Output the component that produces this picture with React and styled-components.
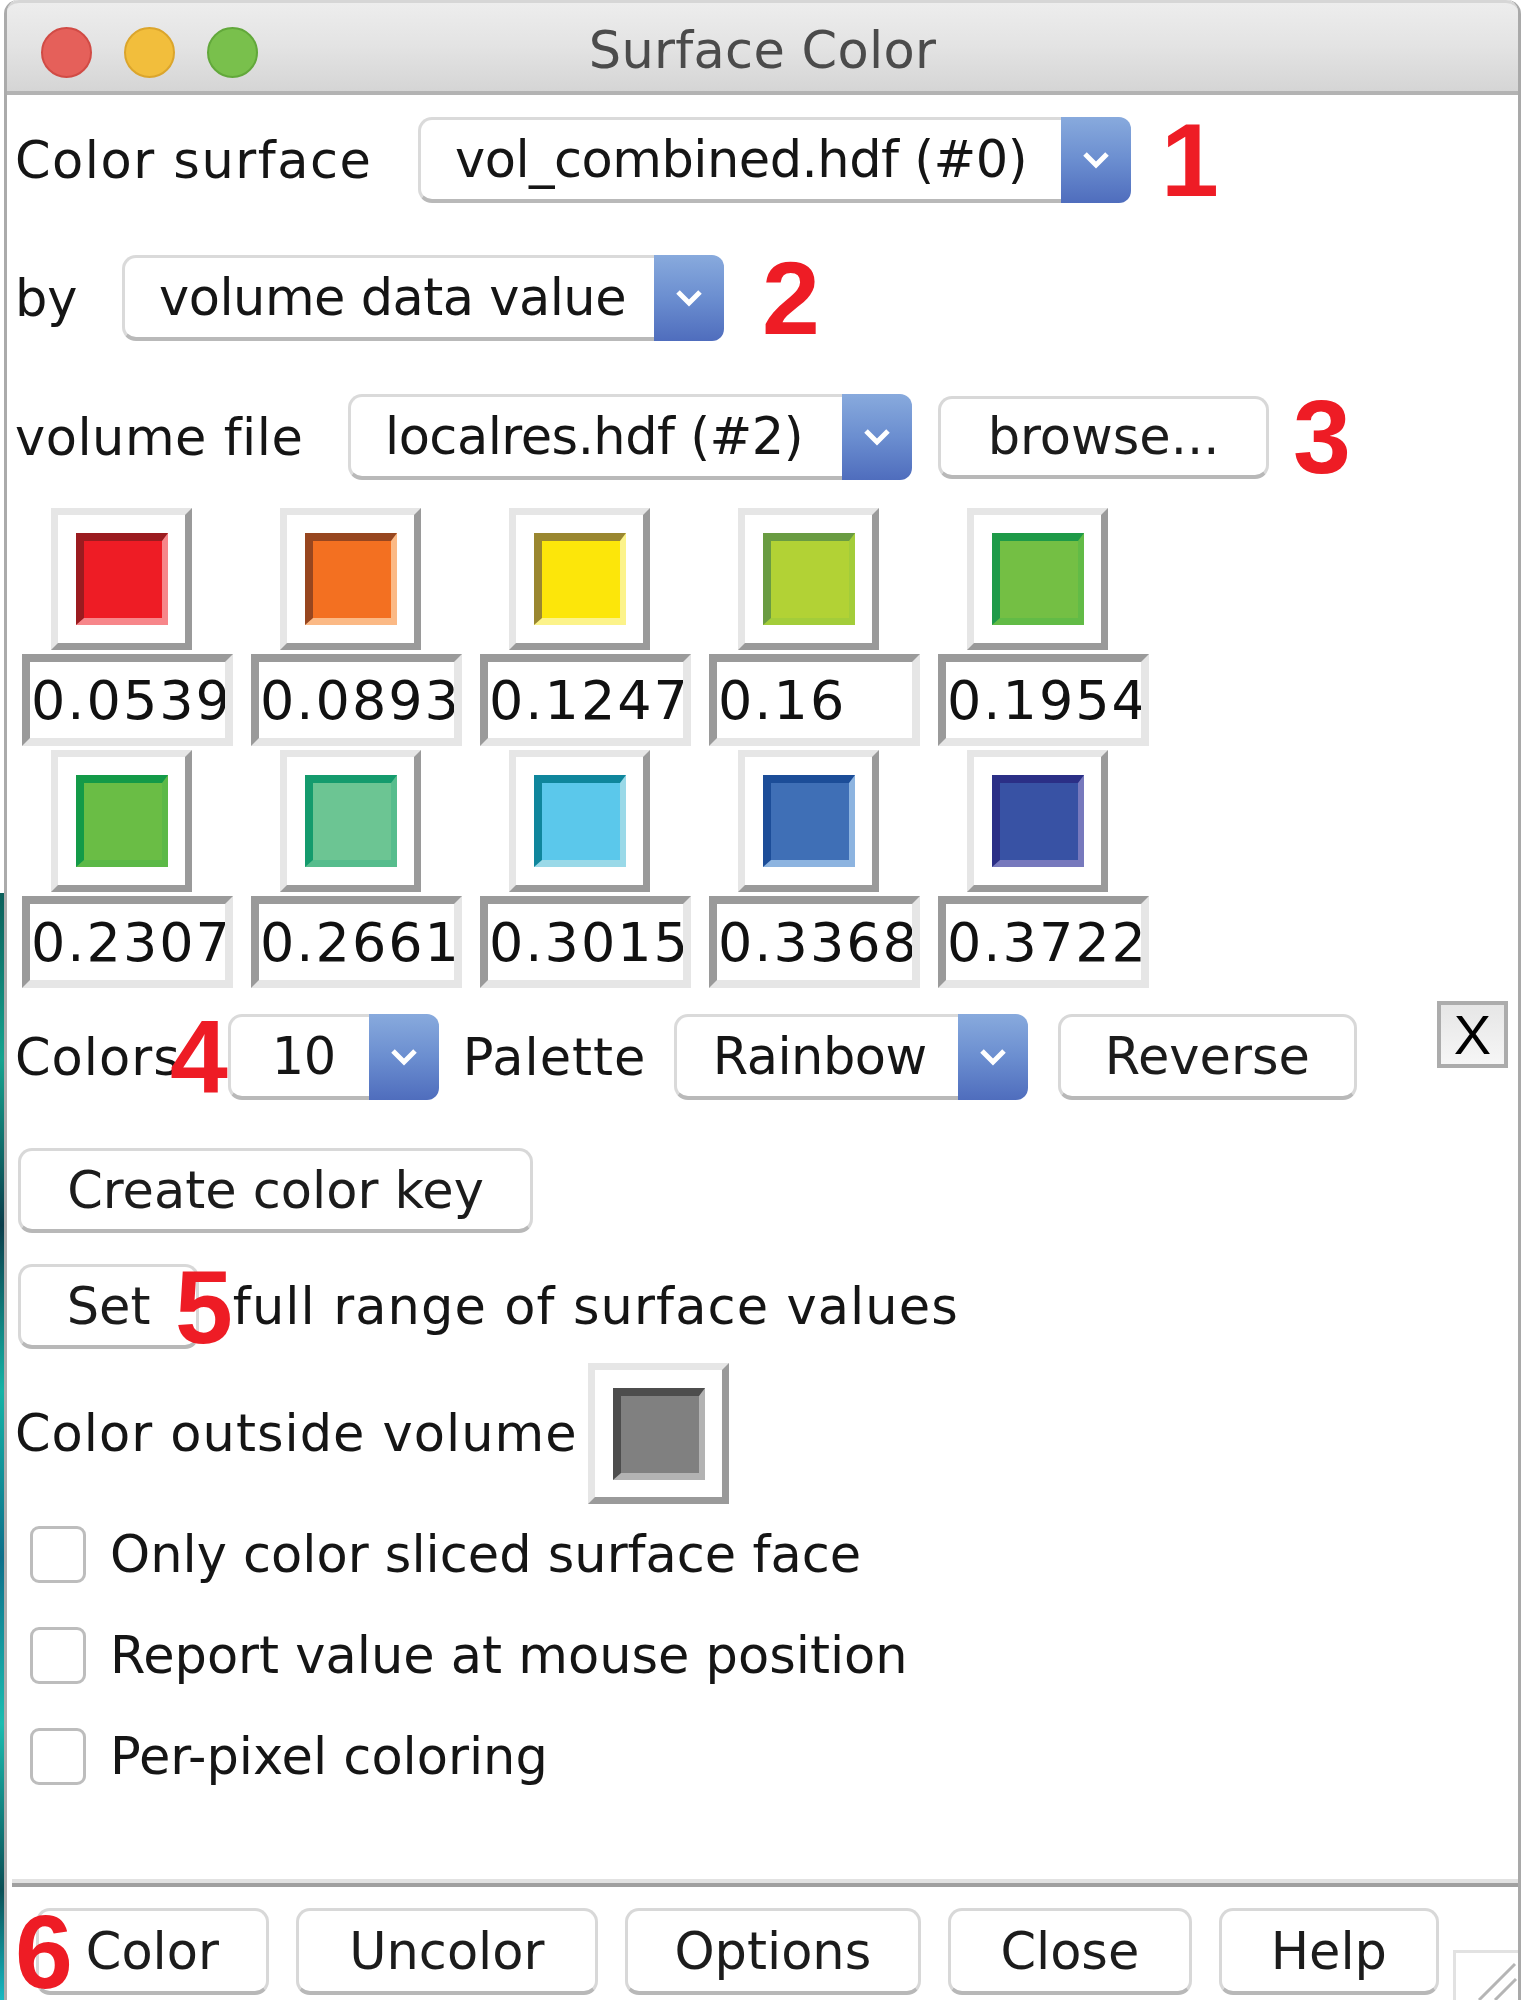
import React from "react";
import styled, { createGlobalStyle } from "styled-components";

const GlobalStyle = createGlobalStyle`
  html, body {
    margin: 0;
    padding: 0;
    background: #ffffff;
  }
  body {
    font-family: "DejaVu Sans", "Liberation Sans", sans-serif;
    color: #151515;
  }
`;

const SWATCHES = [
  { v: "0.0539", c: "#ee1c25", d: "#9b1b1f", l: "#f7868a" },
  { v: "0.0893", c: "#f37021", d: "#97461f", l: "#fbb985" },
  { v: "0.1247", c: "#fce60a", d: "#9a8730", l: "#fcf38a" },
  { v: "0.16", c: "#b2d235", d: "#6a9c42", l: "#a3cd3a" },
  { v: "0.1954", c: "#74bf44", d: "#1e9a48", l: "#62bb46" },
  { v: "0.2307", c: "#6abd45", d: "#139a48", l: "#5cb947" },
  { v: "0.2661", c: "#6cc593", d: "#149b6d", l: "#57bd8d" },
  { v: "0.3015", c: "#5bc8eb", d: "#0f869c", l: "#9ad9e8" },
  { v: "0.3368", c: "#3f6fb6", d: "#1c4d98", l: "#8db4e0" },
  { v: "0.3722", c: "#3852a4", d: "#2b2f86", l: "#7779bd" },
];

const OPTIONS = [
  "Only color sliced surface face",
  "Report value at mouse position",
  "Per-pixel coloring",
];

const FOOTER = [
  { label: "Color", w: 233 },
  { label: "Uncolor", w: 302 },
  { label: "Options", w: 296 },
  { label: "Close", w: 244 },
  { label: "Help", w: 220 },
];

function Chevron() {
  return (
    <svg width="28" height="18" viewBox="0 0 28 18">
      <polyline
        points="3,3 14,14 25,3"
        fill="none"
        stroke="#ffffff"
        strokeWidth="5"
      />
    </svg>
  );
}

function Dropdown({ width, value, pad }) {
  return (
    <Select $w={width}>
      <SelectField $pad={pad}>{value}</SelectField>
      <SelectArrow>
        <Chevron />
      </SelectArrow>
    </Select>
  );
}

function Swatch({ c, d, l }) {
  return (
    <SwatchBox>
      <Chip $c={c} $d={d} $l={l} />
    </SwatchBox>
  );
}

export default function App() {
  const rows = [SWATCHES.slice(0, 5), SWATCHES.slice(5, 10)];

  return (
    <Page>
      <GlobalStyle />
      <DesktopStrip />
      <Window>
        <TitleBar>
          <Lights>
            <Light $c="#e5605a" $b="#d14b45" />
            <Light $c="#f2be3c" $b="#dba52c" />
            <Light $c="#79c04c" $b="#62a83b" />
          </Lights>
          <Title>Surface Color</Title>
        </TitleBar>

        <Body>
          <Row $mt={22} $h={86}>
            <Label $w={403} $ls={1.5}>
              Color surface
            </Label>
            <Dropdown width={713} value="vol_combined.hdf (#0)" />
            <Annot $ml={30}>1</Annot>
          </Row>

          <Row $mt={52} $h={86}>
            <Label $w={107}>by</Label>
            <Dropdown width={602} value="volume data value" />
            <Annot $ml={38}>2</Annot>
          </Row>

          <Row $mt={52} $h={88}>
            <Label $w={333} $ls={0.5}>
              volume file
            </Label>
            <Dropdown width={564} value="localres.hdf (#2)" />
            <Button $w={331} $h={83} $ml={26}>
              browse...
            </Button>
            <Annot $ml={24}>3</Annot>
          </Row>

          <SwatchGrid>
            {rows.map((row, i) => (
              <React.Fragment key={i}>
                {row.map((s) => (
                  <Swatch key={"s" + s.v} {...s} />
                ))}
                {row.map((s) => (
                  <ValueField key={"v" + s.v}>{s.v}</ValueField>
                ))}
              </React.Fragment>
            ))}
          </SwatchGrid>

          <Row $mt={26} $h={86}>
            <Label $w={155} $ls={1}>
              Colors
            </Label>
            <Annot $ml={0}>4</Annot>
            <Dropdown width={211} value="10" pad={41} />
            <Label $w={211} $ml={24} $ls={1}>
              Palette
            </Label>
            <Dropdown width={354} value="Rainbow" pad={36} />
            <Button $w={299} $h={86} $ml={30}>
              Reverse
            </Button>
            <CloseX>X</CloseX>
          </Row>

          <Row $mt={48} $h={85}>
            <Button $w={515} $h={85} $ml={3}>
              Create color key
            </Button>
          </Row>

          <Row $mt={31} $h={85}>
            <Button $w={181} $h={85} $ml={3}>
              Set
            </Button>
            <Annot $ml={-24}>5</Annot>
            <Label $ls={1.1}>full range of surface values</Label>
          </Row>

          <Row $mt={14} $h={141}>
            <Label $w={573} $ls={1}>
              Color outside volume
            </Label>
            <SwatchBox $h={141}>
              <Chip $c="#808080" $d="#4d4d4d" $l="#b3b3b3" />
            </SwatchBox>
          </Row>

          <Checks>
            {OPTIONS.map((o) => (
              <CheckRow key={o}>
                <CheckBox />
                <Label>{o}</Label>
              </CheckRow>
            ))}
          </Checks>
        </Body>

        <Separator />

        <Footer>
          <Annot $ml={8} $mr={-64}>
            6
          </Annot>
          {FOOTER.map((b) => (
            <Button key={b.label} $w={b.w} $h={87}>
              {b.label}
            </Button>
          ))}
        </Footer>

        <Grip>
          <svg width="65" height="50" viewBox="0 0 65 50">
            <path d="M1.5 50 V1.5 H65" fill="none" stroke="#e2e2e2" strokeWidth="3" />
            <line x1="26" y1="50" x2="62" y2="14" stroke="#b5b5b5" strokeWidth="3" />
            <line x1="42" y1="50" x2="63" y2="29" stroke="#b5b5b5" strokeWidth="3" />
          </svg>
        </Grip>
      </Window>
    </Page>
  );
}

const Page = styled.div`
  display: flex;
  width: 1525px;
  height: 2000px;
  overflow: hidden;
  background: #ffffff;
`;

const DesktopStrip = styled.div`
  width: 4px;
  margin-top: 893px;
  height: 1107px;
  background: linear-gradient(
    180deg,
    #0b5f5a 0%,
    #16a38f 15%,
    #0a3d4a 30%,
    #15b3a6 45%,
    #0d6f8a 60%,
    #1bbcb0 75%,
    #0a4f55 90%,
    #17b9c2 100%
  );
`;

const Window = styled.div`
  position: relative;
  width: 1517px;
  height: 2000px;
  box-sizing: border-box;
  display: flex;
  flex-direction: column;
  background: #ffffff;
  border-left: 3px solid #ababab;
  border-right: 3px solid #a9a9a9;
  border-radius: 14px 14px 0 0;
`;

const TitleBar = styled.div`
  position: relative;
  height: 95px;
  box-sizing: border-box;
  display: flex;
  align-items: center;
  justify-content: center;
  padding-top: 7px;
  background: linear-gradient(180deg, #ededed 0%, #e3e3e3 50%, #d5d5d5 100%);
  border-top: 3px solid #d6d6d6;
  border-bottom: 4px solid #b3b3b3;
  border-radius: 12px 12px 0 0;
`;

const Lights = styled.div`
  position: absolute;
  left: 34px;
  top: 24px;
  display: flex;
  gap: 32px;
`;

const Light = styled.div`
  width: 51px;
  height: 51px;
  box-sizing: border-box;
  border-radius: 50%;
  background: ${(p) => p.$c};
  border: 2px solid ${(p) => p.$b};
`;

const Title = styled.div`
  font-size: 51px;
  color: #4b4b4b;
  letter-spacing: 0.3px;
`;

const Body = styled.div`
  flex: 1;
  display: flex;
  flex-direction: column;
  padding-left: 8px;
`;

const Row = styled.div`
  position: relative;
  display: flex;
  align-items: center;
  height: ${(p) => p.$h}px;
  margin-top: ${(p) => p.$mt}px;
`;

const Label = styled.div`
  flex: none;
  width: ${(p) => (p.$w ? `${p.$w}px` : "auto")};
  margin-left: ${(p) => p.$ml || 0}px;
  font-size: 51px;
  letter-spacing: ${(p) => p.$ls || 0}px;
  white-space: nowrap;
  color: #151515;
`;

const Annot = styled.span`
  flex: none;
  position: relative;
  z-index: 3;
  margin-left: ${(p) => p.$ml || 0}px;
  margin-right: ${(p) => p.$mr || 0}px;
  font-family: "Liberation Sans", Arial, sans-serif;
  font-weight: 700;
  font-size: 104px;
  line-height: 1;
  color: #ee1c25;
`;

const Select = styled.div`
  flex: none;
  display: flex;
  width: ${(p) => p.$w}px;
  height: 86px;
`;

const SelectField = styled.div`
  flex: 1;
  display: flex;
  align-items: center;
  box-sizing: border-box;
  padding-left: ${(p) => p.$pad || 34}px;
  background: #ffffff;
  border: 3px solid #dadada;
  border-bottom: 4px solid #b9b9b9;
  border-right: none;
  border-radius: 14px 0 0 14px;
  font-size: 51px;
  letter-spacing: -0.5px;
  white-space: nowrap;
  color: #151515;
`;

const SelectArrow = styled.div`
  width: 70px;
  display: flex;
  align-items: center;
  justify-content: center;
  background: linear-gradient(180deg, #88aadd 0%, #6b8ed0 50%, #4f6dbd 100%);
  border-radius: 0 12px 12px 0;
`;

const Button = styled.div`
  flex: none;
  box-sizing: border-box;
  width: ${(p) => p.$w}px;
  height: ${(p) => p.$h}px;
  margin-left: ${(p) => p.$ml || 0}px;
  display: flex;
  align-items: center;
  justify-content: center;
  background: #ffffff;
  border: 3px solid #d8d8d8;
  border-bottom: 4px solid #b8b8b8;
  border-radius: 14px;
  font-size: 51px;
  color: #1c1c1c;
  white-space: nowrap;
`;

const CloseX = styled.div`
  flex: none;
  align-self: flex-start;
  margin-top: -13px;
  margin-left: auto;
  margin-right: 10px;
  width: 71px;
  height: 67px;
  box-sizing: border-box;
  display: flex;
  align-items: center;
  justify-content: center;
  border: 4px solid #acacac;
  background: linear-gradient(180deg, #e6e6e6 0%, #f6f6f6 100%);
  font-family: "Liberation Sans", Arial, sans-serif;
  font-weight: 400;
  font-size: 56px;
  color: #000000;
`;

const SwatchGrid = styled.div`
  display: grid;
  grid-template-columns: repeat(5, 211px);
  column-gap: 18px;
  row-gap: 4px;
  margin-top: 27px;
  margin-left: 7px;
`;

const SwatchBox = styled.div`
  flex: none;
  box-sizing: border-box;
  width: 141px;
  height: ${(p) => p.$h || 142}px;
  margin-left: ${(p) => (p.$h ? 0 : 29)}px;
  display: flex;
  align-items: center;
  justify-content: center;
  background: #ffffff;
  border: 7px solid;
  border-color: #e6e6e6 #9a9a9a #9a9a9a #e6e6e6;
`;

const Chip = styled.div`
  width: 92px;
  height: 92px;
  box-sizing: border-box;
  background: ${(p) => p.$c};
  border-style: solid;
  border-width: 8px 6px 7px 8px;
  border-color: ${(p) => `${p.$d} ${p.$l} ${p.$l} ${p.$d}`};
`;

const ValueField = styled.div`
  box-sizing: border-box;
  width: 211px;
  height: 92px;
  display: flex;
  align-items: center;
  padding-left: 1px;
  overflow: hidden;
  white-space: nowrap;
  background: #ffffff;
  border: 8px solid;
  border-color: #9a9a9a #e6e6e6 #e6e6e6 #9a9a9a;
  font-size: 54px;
  letter-spacing: 2px;
  color: #111111;
`;

const Checks = styled.div`
  display: flex;
  flex-direction: column;
  gap: 44px;
  margin-top: 22px;
`;

const CheckRow = styled.div`
  display: flex;
  align-items: center;
  gap: 24px;
  height: 57px;
  padding-left: 15px;
`;

const CheckBox = styled.div`
  flex: none;
  width: 56px;
  height: 57px;
  box-sizing: border-box;
  border: 3px solid #bdbdbd;
  border-radius: 9px;
  background: #ffffff;
`;

const Separator = styled.div`
  margin-left: 5px;
  height: 8px;
  box-sizing: border-box;
  border-top: 4px solid #e2e2e2;
  background: #a0a0a0;
`;

const Footer = styled.div`
  display: flex;
  align-items: center;
  gap: 27px;
  height: 87px;
  margin-top: 21px;
  margin-bottom: 5px;
`;

const Grip = styled.div`
  position: absolute;
  right: 0;
  bottom: 0;
  width: 65px;
  height: 50px;
`;
